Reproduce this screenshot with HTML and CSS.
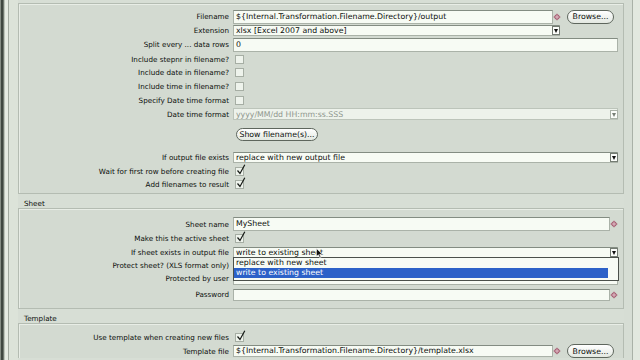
FILE: index.html
```html
<!DOCTYPE html>
<html lang="en">
<head>
    <meta charset="UTF-8">
    <meta name="viewport" content="width=device-width, initial-scale=1.0">
    <title>Excel Writer - Content</title>
    <link rel="stylesheet" href="styles.css">
</head>
<body>
    <div class="window">
        <div class="frame-left"></div>

        <div class="pane">
            <!-- File settings -->
            <div class="group group-file">
                <div class="row h15">
                    <span class="label">Filename</span>
                    <div class="field w-file">${Internal.Transformation.Filename.Directory}/output</div>
                    <span class="var"><svg width="8" height="8" viewBox="0 0 8 8"><path d="M4 0.4L7.6 4L4 7.6L0.4 4Z" fill="#a0566b"/><path d="M4 1.6V6.4M1.6 4H6.4" stroke="#e9cbd3" stroke-width="0.9"/></svg></span>
                    <button class="btn browse">Browse...</button>
                </div>
                <div class="row h13">
                    <span class="label">Extension</span>
                    <div class="select w-ext">
                        <span class="select-text">xlsx [Excel 2007 and above]</span>
                        <span class="arrow"></span>
                    </div>
                </div>
                <div class="row h15">
                    <span class="label">Split every ... data rows</span>
                    <div class="field grow">0</div>
                </div>
                <div class="row h14">
                    <span class="label">Include stepnr in filename?</span>
                    <span class="check"></span>
                </div>
                <div class="row h13">
                    <span class="label">Include date in filename?</span>
                    <span class="check"></span>
                </div>
                <div class="row h14">
                    <span class="label">Include time in filename?</span>
                    <span class="check"></span>
                </div>
                <div class="row h14">
                    <span class="label">Specify Date time format</span>
                    <span class="check"></span>
                </div>
                <div class="row h14">
                    <span class="label">Date time format</span>
                    <div class="select grow disabled tall">
                        <span class="select-text">yyyy/MM/dd HH:mm:ss.SSS</span>
                        <span class="arrow"></span>
                    </div>
                </div>
                <div class="row h15 gap-6">
                    <span class="label"></span>
                    <button class="btn show">Show filename(s)...</button>
                </div>
                <div class="row h14 gap-8">
                    <span class="label">If output file exists</span>
                    <div class="select grow">
                        <span class="select-text">replace with new output file</span>
                        <span class="arrow"></span>
                    </div>
                </div>
                <div class="row h14">
                    <span class="label">Wait for first row before creating file</span>
                    <span class="check"><svg class="tick" width="10" height="11" viewBox="0 0 10 11"><path d="M1.5 6.5L4 9.5L8.8 0.8" fill="none" stroke="#151915" stroke-width="1.2"/></svg></span>
                </div>
                <div class="row h12">
                    <span class="label">Add filenames to result</span>
                    <span class="check"><svg class="tick" width="10" height="11" viewBox="0 0 10 11"><path d="M1.5 6.5L4 9.5L8.8 0.8" fill="none" stroke="#151915" stroke-width="1.2"/></svg></span>
                </div>
            </div>

            <div class="section-title">Sheet</div>
            <div class="group group-sheet">
                <div class="row h14">
                    <span class="label">Sheet name</span>
                    <div class="field grow">MySheet</div>
                    <span class="var"><svg width="8" height="8" viewBox="0 0 8 8"><path d="M4 0.4L7.6 4L4 7.6L0.4 4Z" fill="#a0566b"/><path d="M4 1.6V6.4M1.6 4H6.4" stroke="#e9cbd3" stroke-width="0.9"/></svg></span>
                </div>
                <div class="row h15">
                    <span class="label">Make this the active sheet</span>
                    <span class="check"><svg class="tick" width="10" height="11" viewBox="0 0 10 11"><path d="M1.5 6.5L4 9.5L8.8 0.8" fill="none" stroke="#151915" stroke-width="1.2"/></svg></span>
                </div>
                <div class="row h13">
                    <span class="label">If sheet exists in output file</span>
                    <div class="combo">
                        <div class="select">
                            <span class="select-text">write to existing sheet</span>
                            <span class="arrow"></span>
                        </div>
                        <div class="popup">
                            <div class="opt">replace with new sheet</div>
                            <div class="opt selected">write to existing sheet</div>
                        </div>
                        <svg class="cursor" width="7" height="11" viewBox="0 0 7 11"><path d="M0.5 0.5V8.5L2.4 6.8L3.8 10L5 9.4L3.7 6.3L6.3 6.2Z" fill="#111" stroke="#fff" stroke-width="0.6"/></svg>
                    </div>
                </div>
                <div class="row h12">
                    <span class="label">Protect sheet? (XLS format only)</span>
                    <span class="check"></span>
                </div>
                <div class="row h15">
                    <span class="label">Protected by user</span>
                    <div class="field grow short"></div>
                </div>
                <div class="row h17">
                    <span class="label">Password</span>
                    <div class="field grow thin"></div>
                    <span class="var"><svg width="8" height="8" viewBox="0 0 8 8"><path d="M4 0.4L7.6 4L4 7.6L0.4 4Z" fill="#a0566b"/><path d="M4 1.6V6.4M1.6 4H6.4" stroke="#e9cbd3" stroke-width="0.9"/></svg></span>
                </div>
            </div>

            <div class="section-title">Template</div>
            <div class="group group-template">
                <div class="row h14">
                    <span class="label">Use template when creating new files</span>
                    <span class="check"><svg class="tick" width="10" height="11" viewBox="0 0 10 11"><path d="M1.5 6.5L4 9.5L8.8 0.8" fill="none" stroke="#151915" stroke-width="1.2"/></svg></span>
                </div>
                <div class="row h14">
                    <span class="label">Template file</span>
                    <div class="field w-file thin">${Internal.Transformation.Filename.Directory}/template.xlsx</div>
                    <span class="var"><svg width="8" height="8" viewBox="0 0 8 8"><path d="M4 0.4L7.6 4L4 7.6L0.4 4Z" fill="#a0566b"/><path d="M4 1.6V6.4M1.6 4H6.4" stroke="#e9cbd3" stroke-width="0.9"/></svg></span>
                    <button class="btn browse">Browse...</button>
                </div>
            </div>
        </div>

        <div class="frame-right"></div>
    </div>
</body>
</html>
```

FILE: styles.css
```css
* {
    margin: 0;
    padding: 0;
    box-sizing: border-box;
}

body {
    width: 640px;
    height: 360px;
    overflow: hidden;
    background-color: #d7ded5;
    font-family: "DejaVu Sans", sans-serif;
    font-size: 7.2px;
    color: #0b0e0b;
}

.window {
    display: flex;
    height: 360px;
    overflow: hidden;
}

/* window chrome on both sides */
.frame-left {
    width: 18px;
    flex-shrink: 0;
    background: linear-gradient(to right,
        #858d84 0, #858d84 1px,
        #3f4740 1px, #3f4740 3px,
        #6e766d 3px, #6e766d 4px,
        #bcc4b9 4px, #bcc4b9 5px,
        #e5ebe2 5px, #e5ebe2 8px,
        #a1a99f 8px, #a1a99f 9px,
        #dce3d9 9px, #dce3d9 18px);
}

.frame-right {
    flex: 1;
    background: linear-gradient(to right,
        #d6ddd4 0, #d6ddd4 8px,
        #a9b1a7 8px, #a9b1a7 9px,
        #e2e8df 9px);
}

.pane {
    width: 606px;
    flex-shrink: 0;
    padding-top: 3px;
}

.group {
    border: 1px solid #b4bcb2;
    background-color: #d3dad1;
    box-shadow: inset 1px 1px 0 #e8ede6;
    padding-right: 5px;
}

.group-file {
    padding-top: 5px;
    padding-bottom: 3px;
}

.group-sheet {
    padding-top: 8px;
    padding-bottom: 5px;
}

.group-template {
    padding-top: 6px;
    border-bottom: none;
}

.section-title {
    height: 14px;
    padding-top: 5px;
    padding-left: 6px;
    line-height: 9px;
}

/* form rows */
.row {
    display: flex;
    align-items: center;
}

.h12 { height: 12px; }
.h13 { height: 13px; }
.h14 { height: 14px; }
.h15 { height: 15px; }
.h17 { height: 17px; }
.gap-6 { margin-top: 6px; }
.gap-8 { margin-top: 8px; }

.label {
    width: 214px;
    flex-shrink: 0;
    padding-right: 4px;
    text-align: right;
    white-space: nowrap;
}

.field {
    height: 14px;
    border: 1px solid #aab2a8;
    border-top-color: #838c82;
    background-color: #f7fbf4;
    padding-left: 2px;
    font-size: 7.8px;
    line-height: 12px;
    white-space: nowrap;
    overflow: hidden;
}

.field.thin {
    height: 12px;
    line-height: 10px;
}

.field.short {
    height: 13px;
}

.grow {
    flex: 1;
}

.w-file {
    width: 320px;
    flex-shrink: 0;
}

.var {
    width: 8px;
    display: flex;
    align-items: center;
    justify-content: center;
}

.select {
    display: flex;
    align-items: center;
    height: 11px;
    border: 1px solid #aab2a8;
    border-top-color: #838c82;
    background-color: #f7fbf4;
    font-size: 7.8px;
    line-height: 9px;
}

.select.tall {
    height: 12px;
}

.select.disabled {
    background-color: #edf2eb;
    border-color: #bcc4ba;
    color: #8f978e;
}

.w-ext {
    width: 327px;
}

.select-text {
    flex: 1;
    padding-left: 2px;
    white-space: nowrap;
    overflow: hidden;
}

.arrow {
    width: 8px;
    height: 9px;
    margin-right: -1px;
    border: 1px solid #747c73;
    background-color: #fbfdfa;
    position: relative;
}

.arrow::after {
    content: "";
    position: absolute;
    left: 1px;
    top: 2px;
    border-left: 2.5px solid transparent;
    border-right: 2.5px solid transparent;
    border-top: 4px solid #111;
}

.disabled .arrow {
    border-color: #aab2a8;
}

.disabled .arrow::after {
    border-top-color: #777f76;
}

.btn {
    height: 14px;
    border: 1px solid #5e665d;
    border-radius: 7px;
    background: linear-gradient(#ffffff, #e3e8e1);
    font-family: "DejaVu Sans", sans-serif;
    font-size: 7.8px;
    color: #0b0e0b;
}

.browse {
    width: 47px;
    margin-left: 6px;
    margin-right: 3px;
}

.show {
    width: 82px;
    height: 13px;
    margin-left: 3px;
}

.check {
    width: 9px;
    height: 9px;
    margin-left: 2px;
    border: 1px solid #a6aea4;
    background-color: #eef3ec;
    position: relative;
}

.check .tick {
    position: absolute;
    left: 0;
    top: -4px;
}

/* open dropdown of "If sheet exists" */
.combo {
    flex: 1;
    position: relative;
}

.popup {
    position: absolute;
    left: 0;
    right: -1px;
    top: 10px;
    height: 24px;
    border: 1px solid #4b504b;
    background-color: #f7fbf5;
    padding-right: 10px;
    font-size: 7.8px;
    z-index: 2;
}

.opt {
    height: 10px;
    line-height: 10px;
    padding-left: 2px;
    white-space: nowrap;
}

.opt.selected {
    background-color: #2c61c8;
    color: #ffffff;
}

.cursor {
    position: absolute;
    left: 83px;
    top: 1px;
    z-index: 3;
}
```
